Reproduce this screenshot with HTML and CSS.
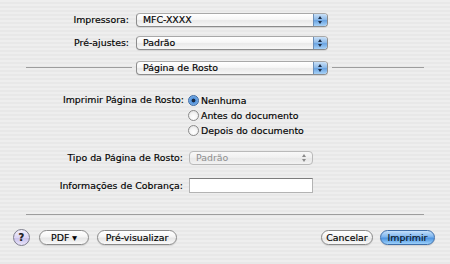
FILE: index.html
```html
<!DOCTYPE html>
<html lang="pt">
<head>
    <meta charset="utf-8">
    <title>Imprimir</title>
    <link rel="stylesheet" href="styles.css">
</head>
<body>
    <div class="dialog">
        <!-- printer / presets -->
        <div class="top-grid">
            <div class="label">Impressora:</div>
            <div class="popup"><span class="popup-text">MFC-XXXX</span><span class="arrows"></span></div>
            <div class="label">Pré-ajustes:</div>
            <div class="popup"><span class="popup-text">Padrão</span><span class="arrows"></span></div>
        </div>

        <div class="pane-row">
            <div class="pane-line left"></div>
            <div class="popup pane"><span class="popup-text">Página de Rosto</span><span class="arrows"></span></div>
            <div class="pane-line right"></div>
        </div>

        <!-- cover page options -->
        <div class="options">
            <div class="label radio-label">Imprimir Página de Rosto:</div>
            <div class="radio-group">
                <div class="radio-row"><span class="radio checked"></span>Nenhuma</div>
                <div class="radio-row"><span class="radio"></span>Antes do documento</div>
                <div class="radio-row"><span class="radio"></span>Depois do documento</div>
            </div>

            <div class="label type-label">Tipo da Página de Rosto:</div>
            <div class="popup disabled"><span class="popup-text">Padrão</span><span class="arrows"></span></div>

            <div class="label info-label">Informações de Cobrança:</div>
            <div class="textfield"></div>
        </div>

        <div class="separator"></div>

        <div class="buttons">
            <span class="help">?</span>
            <span class="btn pdf">PDF <span class="tri">▼</span></span>
            <span class="btn preview">Pré-visualizar</span>
            <span class="spacer"></span>
            <span class="btn cancel">Cancelar</span>
            <span class="btn default">Imprimir</span>
        </div>
    </div>
</body>
</html>
```

FILE: styles.css
```css
* {
    box-sizing: border-box;
    margin: 0;
    padding: 0;
}

body {
    width: 450px;
    height: 264px;
    overflow: hidden;
    background: repeating-linear-gradient(to bottom, #eeeeee 0, #eeeeee 2px, #e8e8e8 2px, #e8e8e8 4px);
    font-family: "DejaVu Sans", sans-serif;
    font-size: 9.4px;
    color: #000;
    -webkit-text-stroke: 0.15px #000;
}

.dialog {
    padding-top: 13px;
}

.label {
    text-align: right;
    white-space: nowrap;
    line-height: 14px;
}

/* top rows */
.top-grid {
    display: grid;
    grid-template-columns: 136px 192px;
    grid-auto-rows: 14px;
    row-gap: 9px;
}

.top-grid .label {
    padding-right: 7px;
}

/* popup buttons */
.popup {
    position: relative;
    display: flex;
    align-items: center;
    height: 14px;
    border: 1px solid #8c8c8c;
    border-top-color: #a8a8a8;
    border-radius: 4px;
    background: linear-gradient(to bottom, #ffffff 0%, #f6f6f6 45%, #e9e9e9 55%, #f7f7f7 100%);
    box-shadow: 0 1px 0 rgba(0, 0, 0, 0.08);
    overflow: hidden;
}

.popup-text {
    flex: 1;
    padding-left: 6px;
    line-height: 12px;
}

.arrows {
    position: relative;
    width: 14px;
    height: 100%;
    border-left: 1px solid #6c8fb8;
    background: linear-gradient(to bottom, #c9e0f7 0%, #8fbbe9 45%, #6aa4e2 55%, #a9d2f7 100%);
}

.arrows::before,
.arrows::after {
    content: "";
    position: absolute;
    left: 4px;
    border-left: 2.5px solid transparent;
    border-right: 2.5px solid transparent;
}

.arrows::before {
    top: 2px;
    border-bottom: 3px solid #1d2f4a;
}

.arrows::after {
    bottom: 2px;
    border-top: 3px solid #1d2f4a;
}

.popup.disabled {
    border-color: #b9b9b9;
    color: #8e8e8e;
    -webkit-text-stroke: 0;
    background: linear-gradient(to bottom, #f8f8f8 0%, #f0f0f0 45%, #e8e8e8 55%, #f2f2f2 100%);
    box-shadow: none;
}

.popup.disabled .arrows {
    border-left: none;
    background: none;
}

.popup.disabled .arrows::before {
    border-bottom-color: #8a8a8a;
}

.popup.disabled .arrows::after {
    border-top-color: #8a8a8a;
}

/* pane switcher */
.pane-row {
    display: flex;
    align-items: center;
    margin-top: 11px;
    padding-left: 26px;
    height: 14px;
}

.pane-line {
    height: 1px;
    background: #9d9d9d;
    margin-top: -2px;
}

.pane-line.left {
    width: 106px;
    margin-right: 4px;
}

.pane-line.right {
    width: 92px;
    margin-left: 4px;
}

.popup.pane {
    width: 192px;
}

/* options */
.options {
    display: grid;
    grid-template-columns: 189px 124px;
    margin-top: 18px;
}

.radio-label {
    padding-right: 5px;
}

.radio-group {
    display: flex;
    flex-direction: column;
    gap: 1px;
    margin-left: -1px;
    width: 200px;
}

.radio-row {
    display: flex;
    align-items: center;
    height: 14px;
    white-space: nowrap;
}

.radio {
    width: 11px;
    height: 11px;
    margin-right: 2px;
    border-radius: 50%;
    border: 1px solid #8a8a8a;
    background: radial-gradient(circle at 50% 70%, #ffffff 0%, #f4f4f4 50%, #dadada 100%);
}

.radio.checked {
    border-color: #3d6aa3;
    background: radial-gradient(circle at 50% 50%, #1b2a40 0, #1b2a40 1.6px, #4f8fd9 2.2px, #9cc8f2 100%);
}

.type-label,
.info-label {
    padding-right: 6px;
}

.type-label {
    margin-top: 14px;
}

.popup.disabled {
    margin-top: 14px;
}

.info-label {
    margin-top: 13px;
    line-height: 15px;
}

.textfield {
    margin-top: 13px;
    height: 15px;
    background: #fff;
    border: 1px solid #b3b3b3;
    border-top-color: #7d7d7d;
}

.separator {
    margin: 21px 0 0 26px;
    width: 398px;
    height: 1px;
    background: #9d9d9d;
}

/* bottom buttons */
.buttons {
    display: flex;
    align-items: center;
    margin-top: 14px;
    padding-left: 13px;
    padding-right: 15px;
    height: 17px;
}

.help {
    width: 17px;
    height: 17px;
    border-radius: 50%;
    border: 1px solid #7d7d8c;
    background: linear-gradient(to bottom, #f1eefb 0%, #ddd6f3 50%, #c9c0ea 52%, #e8e3fa 100%);
    text-align: center;
    font-weight: bold;
    font-size: 10px;
    line-height: 15px;
    color: #222;
}

.btn {
    display: flex;
    justify-content: center;
    align-items: center;
    height: 15px;
    border-radius: 8px;
    border: 1px solid #8a8a8a;
    background: linear-gradient(to bottom, #ffffff 0%, #f5f5f5 45%, #e6e6e6 55%, #f9f9f9 100%);
    box-shadow: 0 1px 1px rgba(0, 0, 0, 0.12);
    white-space: nowrap;
}

.pdf {
    width: 50px;
    margin-left: 9px;
}

.tri {
    font-size: 6px;
    margin-left: 3px;
}

.preview {
    width: 80px;
    margin-left: 8px;
}

.spacer {
    flex: 1;
}

.cancel {
    width: 52px;
}

.default {
    width: 55px;
    margin-left: 7px;
    border-color: #3f6ea8;
    background: linear-gradient(to bottom, #c4e0fb 0%, #7db5ef 45%, #4e94e0 55%, #9bd0fb 100%);
    color: #0c1a2c;
}
```
